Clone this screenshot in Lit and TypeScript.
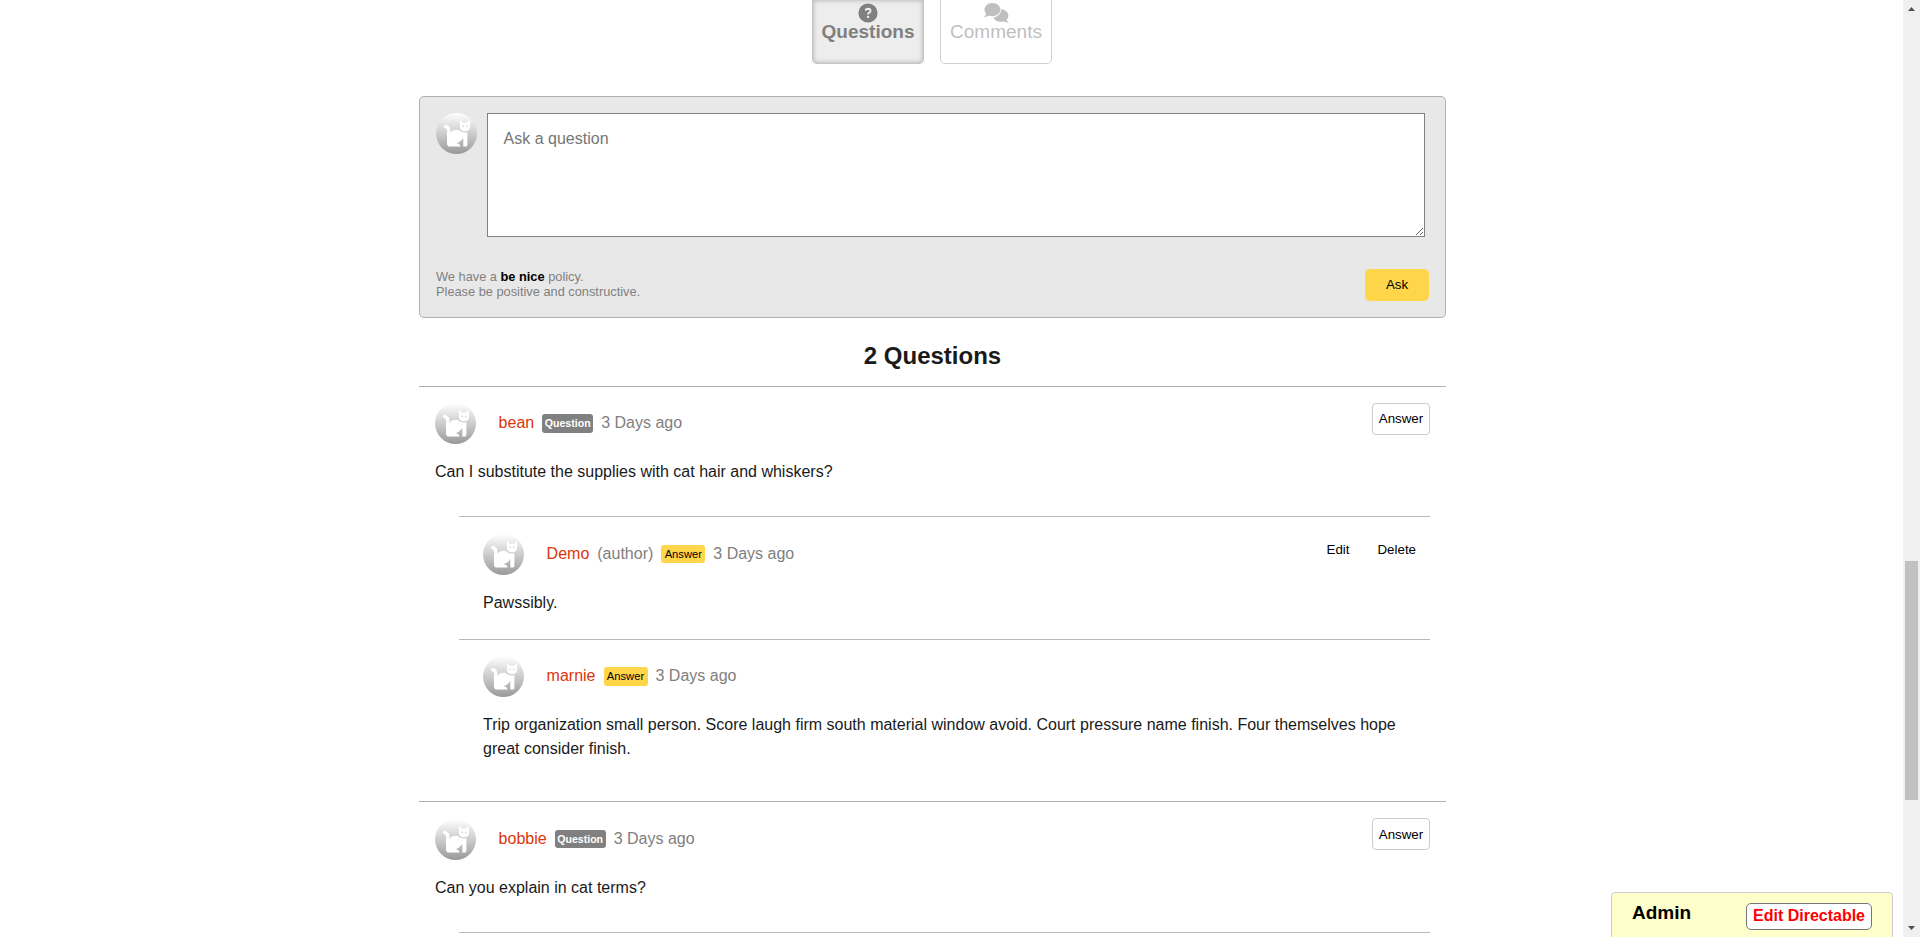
import { LitElement, html, css, nothing } from "lit";
import { customElement, property } from "lit/decorators.js";

const FONT = css`"Liberation Sans", Arial, sans-serif`;

@customElement("cat-avatar")
class CatAvatar extends LitElement {
  static styles = css`
    :host { display: block; width: 41px; height: 41px; flex: none; }
    svg { display: block; }
  `;
  render() {
    return html`<svg width="41" height="41" viewBox="0 0 41 41">
      <defs>
        <linearGradient id="g" x1="0" y1="0" x2="0" y2="1">
          <stop offset="0" stop-color="#fff"></stop>
          <stop offset="1" stop-color="#999"></stop>
        </linearGradient>
      </defs>
      <circle cx="20.5" cy="20.5" r="20.5" fill="url(#g)"></circle>
      <path d="M24 6.8 L27 9.8 H31 L34 6.8 V14.2 Q33.6 18 29 18.3 Q24.4 18 24 14.2 Z" fill="#fff"></path>
      <path d="M9.6 13.6 Q13.2 14.2 12.8 18.4 Q12.2 21 12.6 25" fill="none" stroke="#fff" stroke-width="3.2" stroke-linecap="round"></path>
      <path fill-rule="evenodd" d="M11 25 Q13 21 15.2 18.8 Q18 16.3 22.8 17 Q25 20.2 31.4 19.2 V32 Q31.4 33.6 29.8 33.6 H14 Q11 33.4 11 30.4 Z M20.4 30.3 Q24.3 30.6 24.6 33.6 H27.3 V24.6 Q25.8 28.4 20.4 30.3 Z" fill="#fff"></path>
      <circle cx="27.2" cy="13.3" r=".7" fill="#c4c4c4"></circle>
      <circle cx="30.8" cy="13.3" r=".7" fill="#c4c4c4"></circle>
    </svg>`;
  }
}

@customElement("post-entry")
class PostEntry extends LitElement {
  @property() name = "";
  @property() kind = "Question";
  @property() text = "";
  @property({ type: Boolean }) author = false;
  @property({ type: Boolean }) own = false;
  static styles = css`
    :host { display: block; font: 16px/24px ${FONT}; color: #1a1a1a; }
    .head { display: flex; height: 42px; }
    .meta { display: flex; align-items: center; gap: 8px; margin-left: 22.6px; height: 39.8px; color: #808080; flex: 1; white-space: nowrap; }
    .name { color: #dc3508; }
    .badge { background: #808080; color: #fff; font: bold 10.6px/19px ${FONT}; width: 51px; text-align: center; border-radius: 3px; margin-top: .8px; height: 18.6px; box-sizing: border-box; }
    .badge.answer { background: #ffd54a; color: #000; font-weight: normal; font-size: 11.2px; width: 44px; }
    .actions { display: flex; margin-top: -.3px; }
    button { font: 13.333px/16px ${FONT}; color: #000; background: #fff; height: 32px; padding: .6px 0 0; border: 1px solid #ccc; border-radius: 4px; width: 58px; box-sizing: border-box; }
    .plain { border-color: transparent; background: none; width: auto; padding: .6px 13px 0; }
    p { margin: 14.9px 0 0; }
  `;
  render() {
    return html`<div class="head">
        <cat-avatar></cat-avatar>
        <div class="meta">
          <span class="name">${this.name}</span>
          ${this.author ? html`<span>(author)</span>` : nothing}
          <span class="badge ${this.kind === "Answer" ? "answer" : ""}">${this.kind}</span>
          <span>3 Days ago</span>
        </div>
        <div class="actions">
          ${this.kind === "Question" ? html`<button>Answer</button>` : nothing}
          ${this.own ? html`<button class="plain">Edit</button><button class="plain">Delete</button>` : nothing}
        </div>
      </div>
      <p>${this.text}</p>`;
  }
}

@customElement("app-root")
class AppRoot extends LitElement {
  static styles = css`
    :host { display: flex; height: 937px; overflow: hidden; background: #fff; font: 16px/24px ${FONT}; color: #1a1a1a; }
    * { box-sizing: border-box; }
    .page { flex: 1; height: 937px; overflow: hidden; }
    .column { width: 1027px; margin-left: 419px; }
    .tabs { display: flex; justify-content: center; gap: 16px; height: 64px; padding-right: 1px; }
    .tab { width: 112px; height: 64px; border: 1px solid #d0d0d0; border-top: 0; border-radius: 0 0 5px 5px; color: #bfbfbf; display: flex; flex-direction: column; align-items: center; font-size: 19px; line-height: 21px; padding-top: 3px; }
    .tab svg { display: block; height: 20px; flex: none; overflow: visible; margin-bottom: -2px; }
    .tab.on { background: #ededed; color: #808080; font-weight: bold; border-color: #c4c4c4; box-shadow: inset 0 0 5px #aaa; }
    .ask { margin-top: 32px; height: 222px; background: #e8e8e8; border: 1px solid #b0b0b0; border-radius: 5px; padding: 16px; }
    .compose { display: flex; gap: 10px; }
    textarea { display: block; width: 938px; height: 124px; font: 16px/18px ${FONT}; padding: 16px 15.6px; border: 1px solid #808080; border-radius: 0; margin: 0; background: #fff; }
    textarea::placeholder { color: #757575; }
    .foot { display: flex; justify-content: space-between; margin-top: 32px; }
    .policy { font-size: 12.8px; line-height: 15px; color: #808080; }
    .policy b { color: #000; }
    .send { width: 64px; height: 32px; border: 0; border-radius: 5px; background: #ffd54a; font: 13.333px ${FONT}; color: #000; padding: 0 0 2px; }
    h2 { font-size: 24px; line-height: 28px; margin: 24px 0 16px; text-align: center; }
    .question { border-top: 1px solid #b0b0b0; padding: 16.3px 16px 0; }
    .question + .question { margin-top: 15.9px; }
    .answers { margin: 32.25px 0 0 24px; }
    .item { border-top: 1px solid #b8b8b8; padding: 16.3px 0 24.35px 24px; }
    .bar { width: 17px; height: 937px; background: #f0f0f0; display: flex; flex-direction: column; align-items: center; padding: 7px 0; }
    .bar svg { flex: none; display: block; }
    .bar svg:last-child { margin-top: auto; }
    .thumb { width: 13px; height: 239px; background: #c1c1c1; margin-top: 550px; }
    .admin { position: absolute; left: 1611px; top: 892px; width: 282px; height: 60px; border: 1px solid #ccc; border-radius: 4px; background: #ffc; display: flex; justify-content: space-between; padding: 10px 20px; }
    .admin b { font-size: 19px; line-height: 22px; color: #000; margin-top: -1px; }
    .admin button { width: 126px; height: 27px; border: 1px solid #767676; border-radius: 5px; background: #fff; color: #f00; font: bold 16px ${FONT}; padding: 0 0 2px; white-space: nowrap; }
    .viewport { position: relative; display: flex; width: 1920px; height: 937px; overflow: hidden; }
  `;
  render() {
    return html`<div class="viewport">
      <main class="page"><div class="column">
        <nav class="tabs">
          <div class="tab on">
            <svg width="20" viewBox="0 0 20 20"><circle cx="10" cy="10" r="9.6" fill="#808080"></circle><path d="M7.4 7.6 Q8 5.8 10 5.8 Q12.5 5.9 12.5 7.9 Q12.5 9 11.2 9.7 Q10.1 10.3 10.1 11.5" fill="none" stroke="#ededed" stroke-width="1.9"></path><circle cx="10.1" cy="13.9" r="1.2" fill="#ededed"></circle></svg>
            Questions
          </div>
          <div class="tab">
            <svg width="25" viewBox="0 0 25 20"><path d="M16.9 6.2 C21.4 6.4 24.4 9.2 24.4 12.6 C24.4 14.2 23.7 15.7 22.6 16.8 Q23.2 18.4 24.7 19.6 Q22 19.8 19.6 18.3 C14.8 19.8 10.8 17.7 9.4 14.4 C14.4 13.6 17.3 10.4 16.9 6.2 Z" fill="#bfbfbf"></path><path d="M8.4 0 C13 0 16.3 2.9 16.3 6.6 C16.3 10.4 13 13.2 8.4 13.2 Q6.7 13.2 5.2 12.6 Q2.8 14.1 0 13.9 Q1.6 12.5 2.2 11 Q.5 9 .5 6.6 C.5 2.9 4 0 8.4 0 Z" fill="#bfbfbf"></path></svg>
            Comments
          </div>
        </nav>
        <section class="ask">
          <div class="compose"><cat-avatar></cat-avatar><textarea placeholder="Ask a question"></textarea></div>
          <div class="foot">
            <div class="policy">We have a <b>be nice</b> policy.<br />Please be positive and constructive.</div>
            <button class="send">Ask</button>
          </div>
        </section>
        <h2>2 Questions</h2>
        <section class="question">
          <post-entry name="bean" text="Can I substitute the supplies with cat hair and whiskers?"></post-entry>
          <div class="answers">
            <div class="item"><post-entry name="Demo" kind="Answer" author own text="Pawssibly."></post-entry></div>
            <div class="item"><post-entry name="marnie" kind="Answer" text="Trip organization small person. Score laugh firm south material window avoid. Court pressure name finish. Four themselves hope great consider finish."></post-entry></div>
          </div>
        </section>
        <section class="question">
          <post-entry name="bobbie" text="Can you explain in cat terms?"></post-entry>
          <div class="answers"><div class="item"></div></div>
        </section>
      </div></main>
      <div class="bar">
        <svg width="7" height="4" viewBox="0 0 7 4"><path d="M0 4 L3.5 0 L7 4Z" fill="#505050"></path></svg>
        <div class="thumb"></div>
        <svg width="7" height="4" viewBox="0 0 7 4"><path d="M0 0 L3.5 4 L7 0Z" fill="#505050"></path></svg>
      </div>
      <aside class="admin"><b>Admin</b><button>Edit Directable</button></aside>
    </div>`;
  }
}
